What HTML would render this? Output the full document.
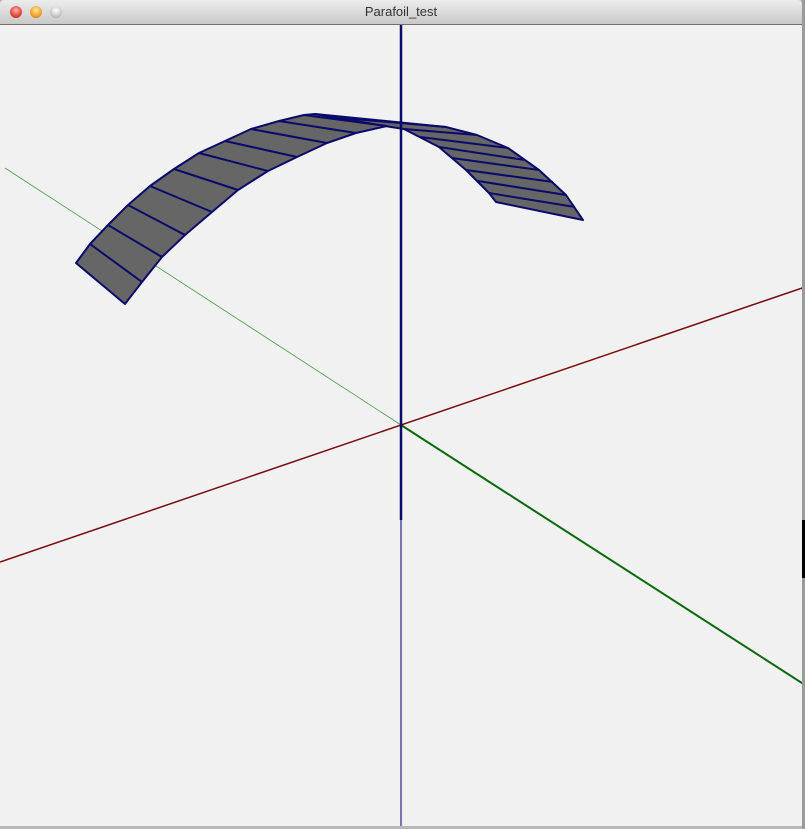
<!DOCTYPE html>
<html><head><style>
html,body{margin:0;padding:0;width:805px;height:829px;overflow:hidden;background:#b8b8b8;}
#title{position:absolute;left:0;top:0;width:802px;height:24px;background:linear-gradient(#ececec,#c9c9c9);border-bottom:1px solid #6e6e6e;border-radius:4px 4px 0 0;font-family:"Liberation Sans",sans-serif;font-size:13px;color:#333;text-align:center;line-height:24px;}
.b{position:absolute;top:6px;width:12px;height:12px;border-radius:50%;}
</style></head><body>
<div style="position:absolute;left:802px;top:0;width:3px;height:829px;background:#9a9a9a"></div>
<div style="position:absolute;left:802px;top:520px;width:3px;height:58px;background:#000"></div>
<div id="title">Parafoil_test
<div class="b" style="left:10px;background:radial-gradient(circle at 50% 35%,#ffb0a8,#e0443a 60%,#a02018)"></div>
<div class="b" style="left:30px;background:radial-gradient(circle at 50% 35%,#ffe6a0,#f0a020 60%,#b06a10)"></div>
<div class="b" style="left:50px;background:radial-gradient(circle at 50% 35%,#fff,#c8c8c8 60%,#909090)"></div>
</div>
<svg style="position:absolute;left:0;top:25px" width="802" height="801" viewBox="0 25 802 801">
<rect x="0" y="25" width="802" height="801" fill="#f1f1f1"/>
<line x1="5" y1="168" x2="401" y2="425" stroke="#4a9a4a" stroke-width="0.8"/>
<line x1="401" y1="425" x2="805" y2="685" stroke="#0a6a0a" stroke-width="2"/>
<line x1="0" y1="562" x2="805" y2="287" stroke="#7a0a0a" stroke-width="1.5"/>
<line x1="401" y1="520" x2="401" y2="826" stroke="#7878b0" stroke-width="2"/>
<g stroke="#0a0a6a" stroke-width="2" stroke-linejoin="round">
<polygon fill="#666" points="76,263 90,244 108,225 128,205 150,186 174,169 199,153 225,141 251,129 279,121 304,115 315,114 387,126 356,133 327,143 297,157 268,171 238,190 212,212 185,235 162,257 142,282 125,304"/>
<polygon fill="#666" points="315,114 446,127 477,135 508,148 539,170 566,195 583,220 496,202 489,193 466,170 439,147 404,129 391,127"/>
<line x1="90" y1="244" x2="142" y2="282"/>
<line x1="108" y1="225" x2="162" y2="257"/>
<line x1="128" y1="205" x2="185" y2="235"/>
<line x1="150" y1="186" x2="212" y2="212"/>
<line x1="174" y1="169" x2="238" y2="190"/>
<line x1="199" y1="153" x2="268" y2="171"/>
<line x1="225" y1="141" x2="297" y2="157"/>
<line x1="251" y1="129" x2="327" y2="143"/>
<line x1="279" y1="121" x2="356" y2="133"/>
<line x1="304" y1="115" x2="387" y2="126"/>
<line x1="330" y1="117" x2="446" y2="127"/>
<line x1="404" y1="129" x2="477" y2="135"/>
<line x1="420" y1="137" x2="508" y2="148"/>
<line x1="439" y1="147" x2="525" y2="160"/>
<line x1="452" y1="158" x2="539" y2="170"/>
<line x1="466" y1="170" x2="553" y2="182"/>
<line x1="478" y1="181" x2="566" y2="195"/>
<line x1="489" y1="193" x2="575" y2="207"/>
</g>
<line x1="401" y1="25" x2="401" y2="520" stroke="#0a0a6a" stroke-width="2.5"/>
</svg>
</body></html>
